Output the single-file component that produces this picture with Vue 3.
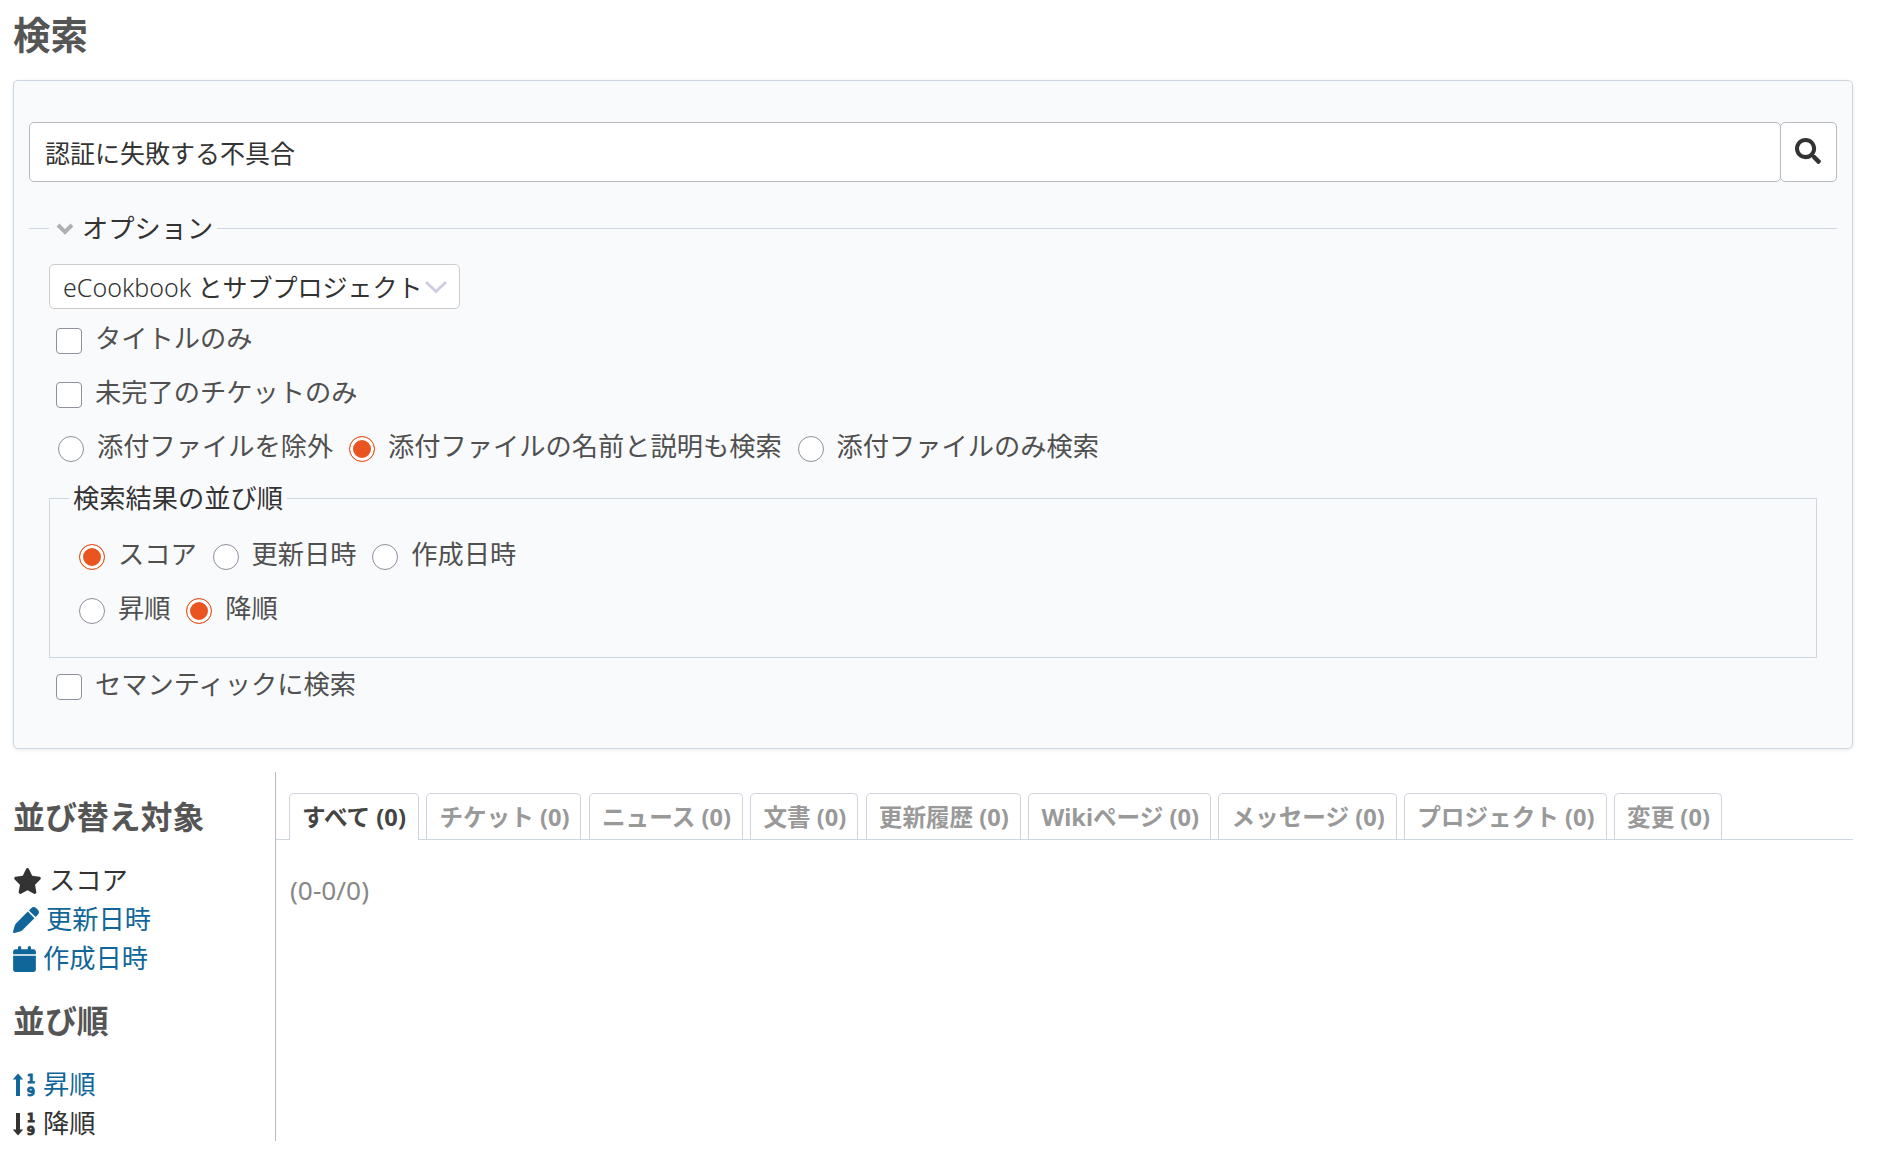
<script setup>
import { ref } from 'vue'

const query = ref('認証に失敗する不具合')
const titlesOnly = ref(false)
const openIssues = ref(false)
const semantic = ref(false)
const attachments = ref('1')
const sortKey = ref('score')
const sortOrder = ref('desc')
const activeTab = ref('all')

const attachmentOptions = [
    { value: '0', label: '添付ファイルを除外' },
    { value: '1', label: '添付ファイルの名前と説明も検索' },
    { value: 'only', label: '添付ファイルのみ検索' }
]

const sortKeys = [
    { value: 'score', label: 'スコア' },
    { value: 'updated', label: '更新日時' },
    { value: 'created', label: '作成日時' }
]

const sortOrders = [
    { value: 'asc', label: '昇順' },
    { value: 'desc', label: '降順' }
]

const tabs = [
    { id: 'all', label: 'すべて (0)' },
    { id: 'issues', label: 'チケット (0)' },
    { id: 'news', label: 'ニュース (0)' },
    { id: 'documents', label: '文書 (0)' },
    { id: 'changesets', label: '更新履歴 (0)' },
    { id: 'wiki', label: 'Wikiページ (0)' },
    { id: 'messages', label: 'メッセージ (0)' },
    { id: 'projects', label: 'プロジェクト (0)' },
    { id: 'changes', label: '変更 (0)' }
]
</script>

<template>
    <div class="page">
        <h2>検索</h2>

        <form class="box" @submit.prevent>
            <div class="search-row">
                <input v-model="query" type="text" class="query">
                <button type="submit" class="search-btn" aria-label="検索">
                    <svg viewBox="0 0 512 512"><path d="M505 442.7L405.3 343c-4.5-4.5-10.6-7-17-7H372c27.6-35.3 44-79.7 44-128C416 93.1 322.9 0 208 0S0 93.1 0 208s93.1 208 208 208c48.3 0 92.7-16.4 128-44v16.3c0 6.4 2.5 12.5 7 17l99.7 99.7c9.4 9.4 24.6 9.4 33.9 0l28.3-28.3c9.4-9.4 9.4-24.6.1-34zM208 336c-70.7 0-128-57.2-128-128 0-70.7 57.2-128 128-128 70.7 0 128 57.2 128 128 0 70.7-57.2 128-128 128z" /></svg>
                </button>
            </div>

            <fieldset class="options">
                <legend>
                    <svg class="toggle" viewBox="0 0 18 12"><path d="M2 2l7 7 7-7" /></svg>
                    <span>オプション</span>
                </legend>

                <div class="select">
                    <span><span class="project">eCookbook</span> とサブプロジェクト</span>
                    <svg viewBox="0 0 24 14"><path d="M2 2l10 9.5 10-9.5" /></svg>
                </div>

                <div class="row">
                    <label><input v-model="titlesOnly" type="checkbox">タイトルのみ</label>
                </div>
                <div class="row">
                    <label><input v-model="openIssues" type="checkbox">未完了のチケットのみ</label>
                </div>
                <div class="row radios">
                    <label v-for="o in attachmentOptions" :key="o.value">
                        <input v-model="attachments" type="radio" name="attachments" :value="o.value">{{ o.label }}
                    </label>
                </div>

                <fieldset class="sort">
                    <legend>検索結果の並び順</legend>
                    <div class="row">
                        <label v-for="o in sortKeys" :key="o.value">
                            <input v-model="sortKey" type="radio" name="sort_key" :value="o.value">{{ o.label }}
                        </label>
                    </div>
                    <div class="row">
                        <label v-for="o in sortOrders" :key="o.value">
                            <input v-model="sortOrder" type="radio" name="sort_order" :value="o.value">{{ o.label }}
                        </label>
                    </div>
                </fieldset>

                <div class="row semantic">
                    <label><input v-model="semantic" type="checkbox">セマンティックに検索</label>
                </div>
            </fieldset>
        </form>

        <div class="results">
            <aside>
                <h3>並び替え対象</h3>
                <ul>
                    <li class="current">
                        <svg class="star" viewBox="0 0 576 512"><path d="M316.9 18C311.6 7 300.4 0 288.1 0s-23.4 7-28.8 18L195 150.3 51.4 171.5c-12 1.8-22 10.2-25.7 21.7s-.7 24.2 7.9 32.7L137.8 329 113.2 474.7c-2 12 3 24.2 12.9 31.3s23 8 33.8 2.3l128.3-68.5 128.3 68.5c10.8 5.7 23.9 4.9 33.8-2.3s14.9-19.3 12.9-31.3L438.5 329 542.7 225.9c8.6-8.5 11.7-21.2 7.9-32.7s-13.7-19.9-25.7-21.7L381.2 150.3 316.9 18z" /></svg>
                        <span>スコア</span>
                    </li>
                    <li>
                        <svg class="pen" viewBox="0 0 512 512"><path d="M362.7 19.3L314.3 67.7 444.3 197.7l48.4-48.4c25-25 25-65.5 0-90.5L453.3 19.3c-25-25-65.5-25-90.5 0zm-71 71L58.6 323.5c-10.4 10.4-18 23.3-22.2 37.4L1 481.2C-1.5 489.7 .8 498.8 7 505s15.3 8.5 23.7 6.1l120.3-35.4c14.1-4.2 27-11.8 37.4-22.2L421.7 220.3 291.7 90.3z" /></svg>
                        <a href="#">更新日時</a>
                    </li>
                    <li>
                        <svg class="narrow" viewBox="0 0 448 512"><path d="M96 32V64H48C21.5 64 0 85.5 0 112v48H448V112c0-26.5-21.5-48-48-48H352V32c0-17.7-14.3-32-32-32s-32 14.3-32 32V64H160V32c0-17.7-14.3-32-32-32S96 14.3 96 32zM448 192H0V464c0 26.5 21.5 48 48 48H400c26.5 0 48-21.5 48-48V192z" /></svg>
                        <a href="#">作成日時</a>
                    </li>
                </ul>

                <h3>並び順</h3>
                <ul>
                    <li>
                        <svg class="narrow" viewBox="0 0 23 26">
                            <path d="M5 1.5L10.2 7.5H7V24H3V7.5H-.2z" />
                            <text x="18" y="11">1</text>
                            <text x="18" y="24">9</text>
                        </svg>
                        <a href="#">昇順</a>
                    </li>
                    <li class="current">
                        <svg class="narrow" viewBox="0 0 23 26">
                            <path d="M5 24.5L10.2 18.5H7V2H3V18.5H-.2z" />
                            <text x="18" y="11">1</text>
                            <text x="18" y="24">9</text>
                        </svg>
                        <span>降順</span>
                    </li>
                </ul>
            </aside>

            <main>
                <ul class="tabs">
                    <li v-for="t in tabs" :key="t.id">
                        <a href="#" :class="{ selected: t.id === activeTab }" @click.prevent="activeTab = t.id">{{ t.label }}</a>
                    </li>
                </ul>
                <p class="pagination">(0-0/0)</p>
            </main>
        </div>
    </div>
</template>

<style>
body {
    margin: 0;
    background: #fff;
}
</style>

<style scoped>
.page {
    box-sizing: border-box;
    padding: 0 27px 0 13px;
    font-family: "Noto Sans", "Noto Sans CJK JP", sans-serif;
    font-size: 26.25px;
    line-height: 39px;
    color: #505050;
}

h2 {
    margin: 0;
    height: 80px;
    line-height: 70px;
    font-size: 37.5px;
    font-weight: bold;
    color: #555;
}

.box {
    box-sizing: border-box;
    height: 669px;
    padding: 41px 15px 0;
    border: 1px solid #ced6e0;
    border-radius: 5px;
    background: #f9fafc;
    box-shadow: 0 1px 4px rgba(0, 0, 0, 0.08);
}

.search-row {
    display: flex;
    height: 60px;
}

.query {
    box-sizing: border-box;
    flex: 1;
    min-width: 0;
    padding: 0 15px;
    border: 1px solid #b8babd;
    border-radius: 5px;
    background: #fff;
    font-family: inherit;
    font-size: 25px;
    color: #333;
    outline: none;
}

.search-btn {
    box-sizing: border-box;
    display: flex;
    align-items: center;
    justify-content: center;
    width: 57px;
    margin-left: -1px;
    padding: 0 2px 2px 0;
    border: 1px solid #b8babd;
    border-radius: 5px;
    background: #fff;
    cursor: pointer;
}

.search-btn svg {
    width: 26px;
    height: 26px;
    fill: #333;
}

fieldset {
    min-width: 0;
    margin: 0;
    padding: 0;
    border: 0 solid #ced6e0;
}

legend {
    color: #333;
}

.options {
    margin-top: 27px;
    padding: 0 20px;
    border-top-width: 1px;
}

.options > legend {
    display: flex;
    align-items: center;
    height: 39px;
    padding: 0 4px 0 7px;
}

.toggle {
    width: 18px;
    height: 12px;
    margin-right: 8px;
    fill: none;
    stroke: #b0b0b0;
    stroke-width: 4;
}

.select {
    box-sizing: border-box;
    display: flex;
    align-items: center;
    justify-content: space-between;
    width: 411px;
    height: 45px;
    margin-top: 16px;
    padding: 1px 11px 0 13px;
    border: 1px solid #ccc;
    border-radius: 5px;
    background: #fff;
    font-size: 25px;
    white-space: nowrap;
    color: #333;
}

.project {
    font-weight: 350;
}

.select svg {
    flex: none;
    width: 24px;
    height: 14px;
    fill: none;
    stroke: #d0cde1;
    stroke-width: 3;
}

.row {
    display: flex;
    gap: 15.75px;
    height: 54px;
    padding-left: 7px;
}

.select + .row {
    margin-top: 2px;
}

.row label {
    display: flex;
    align-items: center;
    height: 54px;
    white-space: nowrap;
}

.radios {
    padding-left: 9px;
}

.row input {
    box-sizing: border-box;
    flex: none;
    appearance: none;
    width: 26px;
    height: 26px;
    margin: 5px 13px 0 0;
    border: 1px solid #8f8f9d;
    background: #fff;
}

.row input[type="checkbox"] {
    border-radius: 4px;
}

.row input[type="radio"] {
    border-radius: 50%;
}

.row input[type="radio"]:checked {
    border-color: #e95420;
    background: #e95420;
    box-shadow: inset 0 0 0 3px #fff;
}

.sort {
    box-sizing: border-box;
    height: 179px;
    margin-top: 6px;
    padding: 9px 22px 0;
    border-width: 1px;
}

.sort legend {
    height: 39px;
    margin-left: -3px;
    padding: 0 4px;
}

.semantic {
    margin-top: -1px;
}

.results {
    display: flex;
    height: 369px;
    margin-top: 23px;
}

aside {
    box-sizing: border-box;
    width: 263px;
    padding-top: 25px;
    border-right: 1px solid #bbb;
}

h3 {
    margin: 0 0 24px;
    font-size: 31.9px;
    line-height: 40px;
    font-weight: bold;
    color: #555;
}

aside ul {
    margin: 0 0 23px;
    padding: 0;
    list-style: none;
}

aside li {
    display: flex;
    align-items: center;
    gap: 7px;
    height: 39px;
    color: #116699;
}

aside li svg {
    height: 26px;
    fill: currentColor;
}

aside li.current {
    color: #333;
}

.star {
    width: 29px;
}

.pen {
    width: 26px;
}

.narrow {
    width: 23px;
}

.narrow text {
    font-family: "DejaVu Sans", sans-serif;
    font-size: 12px;
    font-weight: bold;
    text-anchor: middle;
    stroke: currentColor;
    stroke-width: 0.8;
}

a {
    color: inherit;
    text-decoration: none;
}

main {
    flex: 1;
    min-width: 0;
}

.tabs {
    box-sizing: border-box;
    display: flex;
    gap: 7.5px;
    height: 68px;
    margin: 0;
    padding: 21px 0 0 13px;
    border-bottom: 1px solid #ced6e0;
    list-style: none;
}

.tabs a {
    box-sizing: border-box;
    display: block;
    height: 46px;
    padding: 0 11px 0 12px;
    border: 1px solid #d0d3df;
    border-bottom: 0;
    border-radius: 5px 5px 0 0;
    background: #fff;
    font-size: 23.625px;
    line-height: 46px;
    font-weight: bold;
    white-space: nowrap;
    color: #999;
}

.tabs a.selected {
    height: 47px;
    padding-right: 12px;
    color: #444;
}

.pagination {
    margin: 31px 0 0 14px;
    color: #888;
}
</style>
